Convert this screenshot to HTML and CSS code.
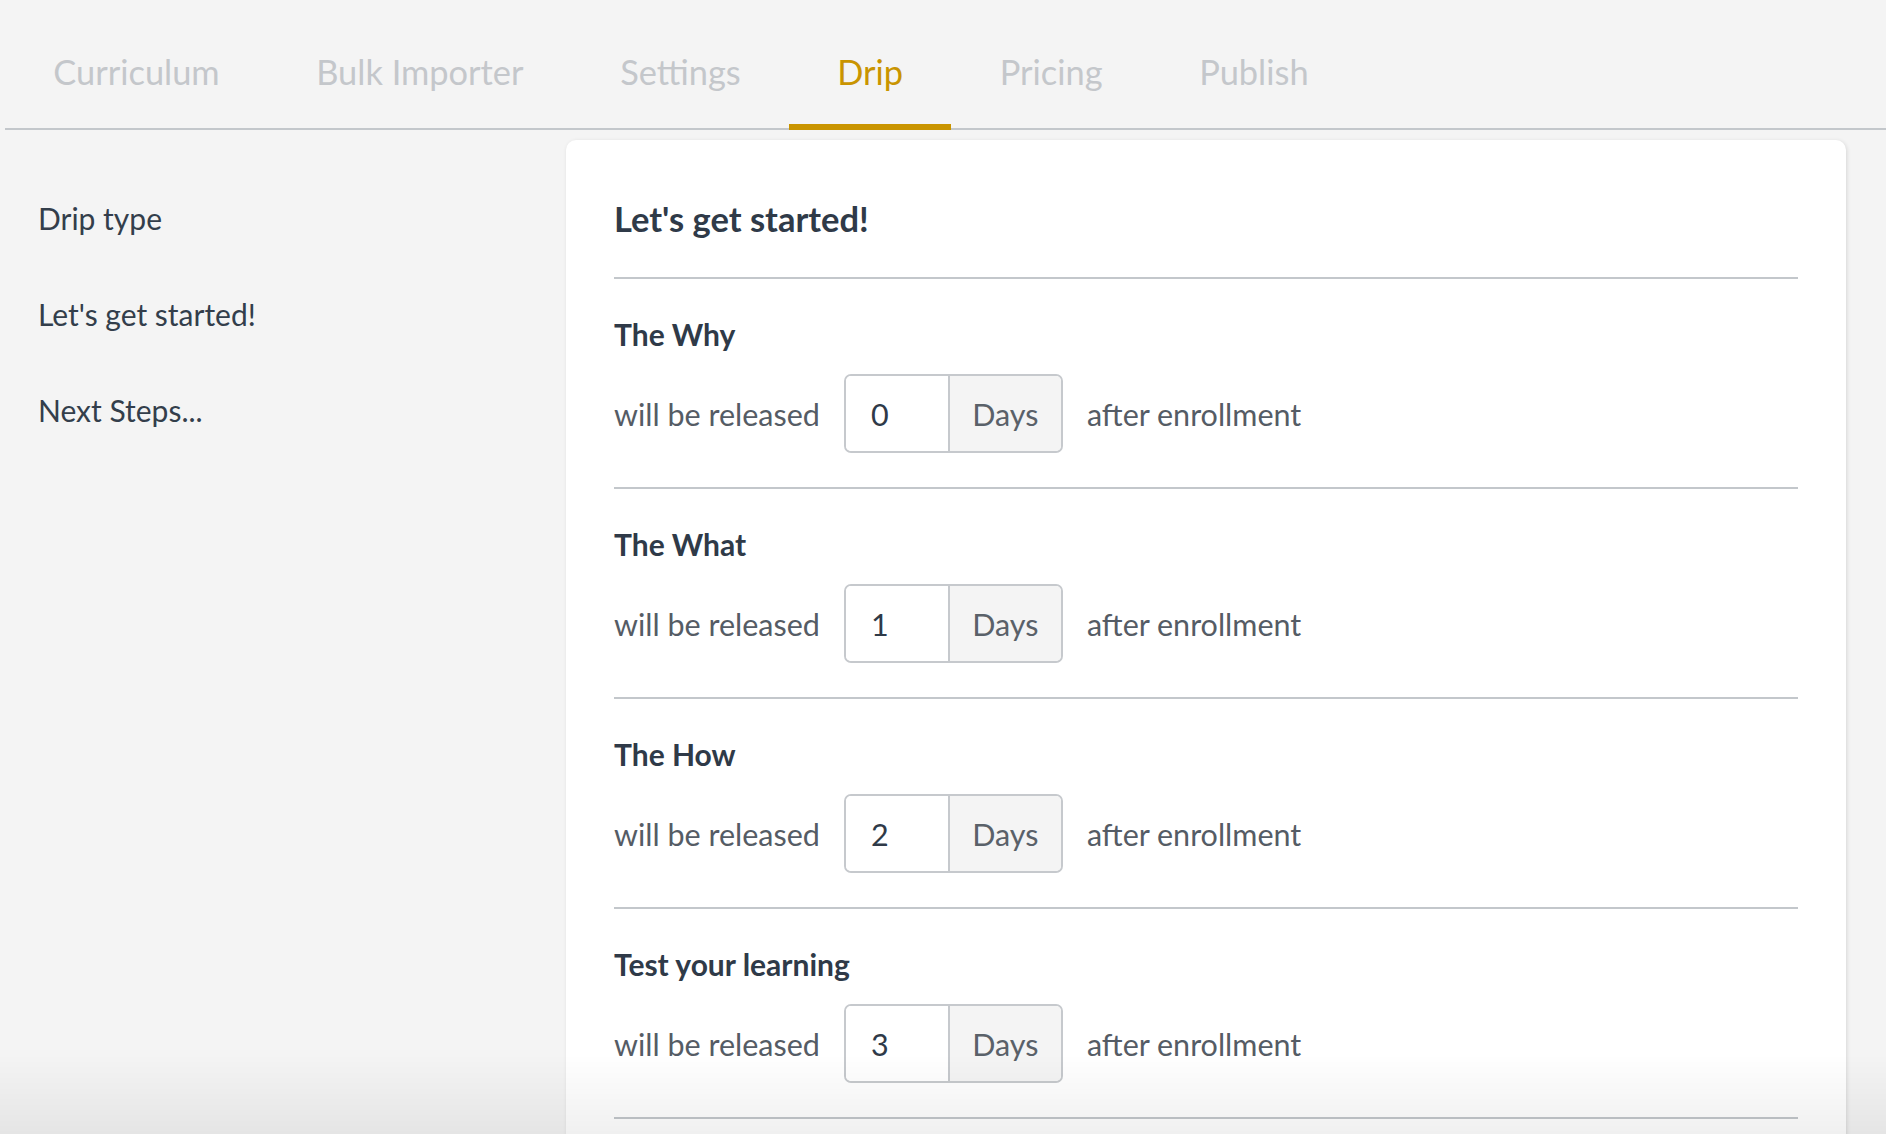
FILE: index.html
```html
<!DOCTYPE html>
<html lang="en">
<head>
<meta charset="utf-8">
<title>Drip</title>
<link rel="stylesheet" href="styles.css">
</head>
<body>
<nav class="tabs">
  <a class="tab">Curriculum</a>
  <a class="tab">Bulk Importer</a>
  <a class="tab">Settings</a>
  <a class="tab active">Drip</a>
  <a class="tab">Pricing</a>
  <a class="tab">Publish</a>
</nav>
<div class="main">
  <aside class="sidebar">
    <div class="side-item">Drip type</div>
    <div class="side-item">Let's get started!</div>
    <div class="side-item">Next Steps...</div>
  </aside>
  <section class="card">
    <h2 class="card-title">Let's get started!</h2>
    <div class="drip-item">
      <h3 class="drip-title">The Why</h3>
      <div class="drip-row">
        <span class="label">will be released</span>
        <div class="input-group"><span class="num">0</span><span class="addon">Days</span></div>
        <span class="label">after enrollment</span>
      </div>
    </div>
    <div class="drip-item">
      <h3 class="drip-title">The What</h3>
      <div class="drip-row">
        <span class="label">will be released</span>
        <div class="input-group"><span class="num">1</span><span class="addon">Days</span></div>
        <span class="label">after enrollment</span>
      </div>
    </div>
    <div class="drip-item">
      <h3 class="drip-title">The How</h3>
      <div class="drip-row">
        <span class="label">will be released</span>
        <div class="input-group"><span class="num">2</span><span class="addon">Days</span></div>
        <span class="label">after enrollment</span>
      </div>
    </div>
    <div class="drip-item">
      <h3 class="drip-title">Test your learning</h3>
      <div class="drip-row">
        <span class="label">will be released</span>
        <div class="input-group"><span class="num">3</span><span class="addon">Days</span></div>
        <span class="label">after enrollment</span>
      </div>
    </div>
  </section>
</div>
<div class="bottom-fade"></div>
</body>
</html>
```

FILE: styles.css
```css
* { box-sizing: border-box; }

html, body {
  margin: 0;
  height: 100%;
  overflow: hidden;
}

body {
  background: #f4f4f4;
  font-family: Lato, "Noto Sans", "Liberation Sans", sans-serif;
  color: #333e4b;
}

.tabs {
  display: flex;
  margin-left: 5px;
  height: 130px;
  border-bottom: 2px solid #c3c7cb;
}

.tab {
  display: block;
  height: 128px;
  padding: 50px 48.3px 0;
  font-size: 34.4px;
  line-height: 44px;
  color: #c4c7cb;
  text-decoration: none;
}

.tab.active {
  height: 130px;
  margin-bottom: -2px;
  color: #c99400;
  border-bottom: 6px solid #c99400;
}

.main {
  display: flex;
  align-items: flex-start;
}

.sidebar {
  width: 566px;
  flex: none;
  padding: 40px 0 0 38px;
}

.side-item {
  font-size: 30px;
  line-height: 96px;
  color: #333e4b;
}

.card {
  flex: 1;
  margin: 10px 40px 0 0;
  background: #fff;
  border-radius: 10px;
  box-shadow: 1px 1px 4px rgba(0, 0, 0, 0.12);
  padding: 0 48px 200px;
}

.card-title {
  margin: 0;
  padding: 57px 0 36px;
  font-size: 34.5px;
  line-height: 44px;
  font-weight: 700;
  color: #2f3a48;
  border-bottom: 2px solid #c3c7cb;
}

.drip-item {
  padding: 35px 0 34px;
  border-bottom: 2px solid #c3c7cb;
}

.drip-title {
  margin: 0 0 20px;
  font-size: 30px;
  line-height: 40px;
  font-weight: 700;
  color: #2f3a48;
}

.drip-row {
  display: flex;
  align-items: center;
  gap: 24px;
  height: 79px;
}

.label {
  font-size: 30.5px;
  color: #555c65;
}

.input-group {
  display: flex;
  height: 79px;
  border: 2px solid #c6c9cd;
  border-radius: 7px;
  overflow: hidden;
}

.num {
  width: 102px;
  padding-left: 25px;
  display: flex;
  align-items: center;
  font-size: 30.5px;
  color: #2f3a48;
  background: #fff;
}

.addon {
  width: 113px;
  border-left: 2px solid #c6c9cd;
  background: #f4f4f4;
  display: flex;
  align-items: center;
  justify-content: center;
  font-size: 30.5px;
  color: #5a6169;
}

.bottom-fade {
  position: fixed;
  left: 0;
  right: 0;
  bottom: 0;
  height: 80px;
  pointer-events: none;
  background: linear-gradient(to bottom, rgba(0, 0, 0, 0), rgba(0, 0, 0, 0.06));
}
```
